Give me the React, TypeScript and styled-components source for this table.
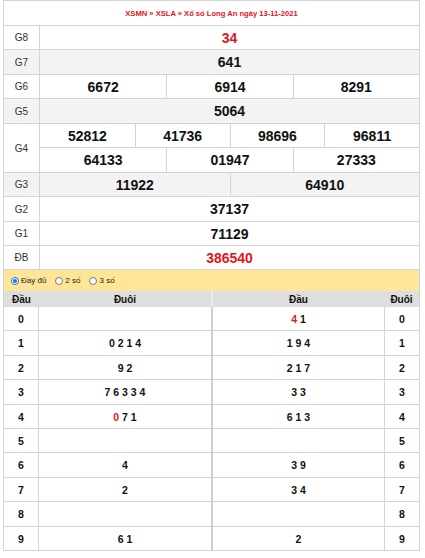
import React from "react";
import styled, { createGlobalStyle } from "styled-components";

const GlobalStyle = createGlobalStyle`
  html, body { margin: 0; padding: 0; background: #fff; }
  body { font-family: "Liberation Sans", Arial, sans-serif; }
`;

const BORDER = "#d4d4d4";
const RED = "#e3151c";

type Side = "left" | "right";

const Page = styled.div`
  padding-left: 3px;
  width: 417px;
`;

const Results = styled.div`
  box-sizing: border-box;
  width: 417px;
  border: 1px solid ${BORDER};
  border-bottom: none;
  display: flex;
  flex-direction: column;
`;

const TitleRow = styled.div`
  box-sizing: border-box;
  height: 25px;
  border-bottom: 1px solid ${BORDER};
  display: flex;
  align-items: center;
  justify-content: center;
  color: ${RED};
  font-weight: bold;
  font-size: 7.6px;
`;

const PrizeRow = styled.div<{ $h: number; $alt?: boolean }>`
  box-sizing: border-box;
  height: ${(p) => p.$h}px;
  border-bottom: 1px solid ${BORDER};
  display: grid;
  grid-template-columns: 36px 1fr;
  background: ${(p) => (p.$alt ? "#f3f3f3" : "#fff")};
`;

const Label = styled.div`
  border-right: 1px solid ${BORDER};
  display: flex;
  align-items: center;
  justify-content: center;
  font-size: 10px;
  color: #333;
`;

const Values = styled.div`
  display: flex;
  flex-direction: column;
`;

const ValueLine = styled.div<{ $n: number; $h?: number; $sep?: boolean }>`
  display: grid;
  grid-template-columns: repeat(${(p) => p.$n}, 1fr);
  flex: ${(p) => (p.$h ? `0 0 ${p.$h}px` : "1 1 auto")};
  box-sizing: border-box;
  border-bottom: ${(p) => (p.$sep ? `1px solid ${BORDER}` : "none")};
`;

const Num = styled.div<{ $red?: boolean }>`
  display: flex;
  align-items: center;
  justify-content: center;
  font-weight: bold;
  font-size: 14px;
  color: ${(p) => (p.$red ? RED : "#111")};
  & + & { border-left: 1px solid ${BORDER}; }
`;

const Options = styled.div`
  box-sizing: border-box;
  height: 21px;
  width: 417px;
  background: #ffe597;
  border-left: 1px solid ${BORDER};
  border-right: 1px solid ${BORDER};
  display: flex;
  align-items: center;
  padding-left: 7px;
  gap: 9px;
`;

const Option = styled.label`
  display: flex;
  align-items: center;
  gap: 2px;
  font-size: 8px;
  color: #222;
`;

const Radio = styled.span<{ $on?: boolean }>`
  box-sizing: border-box;
  width: 8px;
  height: 8px;
  border-radius: 50%;
  background: #fff;
  border: 1px solid ${(p) => (p.$on ? "#1a73e8" : "#767676")};
  display: flex;
  align-items: center;
  justify-content: center;
  &::after {
    content: "";
    width: 4px;
    height: 4px;
    border-radius: 50%;
    background: ${(p) => (p.$on ? "#1a73e8" : "transparent")};
  }
`;

const Loto = styled.div`
  display: grid;
  grid-template-columns: 209px 208px;
`;

const LotoHalf = styled.div`
  display: flex;
  flex-direction: column;
`;

const edges = (side: Side, inner: string) =>
  side === "left"
    ? `border-left: 1px solid ${BORDER}; border-right: 1px solid ${inner};`
    : `border-left: 1px solid ${inner}; border-right: 1px solid ${BORDER};`;

const LotoHead = styled.div<{ $side: Side }>`
  box-sizing: border-box;
  height: 16px;
  background: #dedede;
  ${(p) => edges(p.$side, "#ececec")}
  display: grid;
  grid-template-columns: ${(p) => (p.$side === "left" ? "35px 1fr" : "1fr 35px")};
  font-weight: bold;
  font-size: 10px;
  color: #111;
  & > div {
    display: flex;
    align-items: center;
    justify-content: center;
  }
`;

const LotoRow = styled.div<{ $side: Side; $h: number }>`
  box-sizing: border-box;
  height: ${(p) => p.$h}px;
  border-bottom: 1px solid ${BORDER};
  ${(p) => edges(p.$side, "#cfcfcf")}
  display: grid;
  grid-template-columns: ${(p) => (p.$side === "left" ? "35px 1fr" : "1fr 35px")};
`;

const Digit = styled.div<{ $side: Side }>`
  display: flex;
  align-items: center;
  justify-content: center;
  font-weight: bold;
  font-size: 10.5px;
  color: #111;
  ${(p) =>
    p.$side === "left"
      ? `border-right: 1px solid ${BORDER};`
      : `border-left: 1px solid ${BORDER};`}
`;

const Tails = styled.div`
  display: flex;
  align-items: center;
  justify-content: center;
  font-weight: bold;
  font-size: 10.5px;
  color: #111;
  white-space: pre;
`;

const Red = styled.span`
  color: ${RED};
`;

type Part = { t: string; red?: boolean };

const leftData: Part[][] = [
  [],
  [{ t: "0 2 1 4" }],
  [{ t: "9 2" }],
  [{ t: "7 6 3 3 4" }],
  [{ t: "0", red: true }, { t: " 7 1" }],
  [],
  [{ t: "4" }],
  [{ t: "2" }],
  [],
  [{ t: "6 1" }],
];

const rightData: Part[][] = [
  [{ t: "4", red: true }, { t: " 1" }],
  [{ t: "1 9 4" }],
  [{ t: "2 1 7" }],
  [{ t: "3 3" }],
  [{ t: "6 1 3" }],
  [],
  [{ t: "3 9" }],
  [{ t: "3 4" }],
  [],
  [{ t: "2" }],
];

const lotoHeights = [24, 25, 24, 25, 24, 24, 25, 24, 25, 24];

const renderParts = (parts: Part[]) =>
  parts.map((p, i) => (p.red ? <Red key={i}>{p.t}</Red> : <React.Fragment key={i}>{p.t}</React.Fragment>));

type Prize = { label: string; lines: string[][]; h: number; alt?: boolean; red?: boolean };

const prizes: Prize[] = [
  { label: "G8", lines: [["34"]], h: 24, red: true },
  { label: "G7", lines: [["641"]], h: 25, alt: true },
  { label: "G6", lines: [["6672", "6914", "8291"]], h: 24 },
  { label: "G5", lines: [["5064"]], h: 25, alt: true },
  { label: "G4", lines: [["52812", "41736", "98696", "96811"], ["64133", "01947", "27333"]], h: 49 },
  { label: "G3", lines: [["11922", "64910"]], h: 24, alt: true },
  { label: "G2", lines: [["37137"]], h: 25 },
  { label: "G1", lines: [["71129"]], h: 24 },
  { label: "ĐB", lines: [["386540"]], h: 24, red: true },
];

export default function App() {
  return (
    <>
      <GlobalStyle />
      <Page>
        <Results>
          <TitleRow>XSMN » XSLA » Xổ số Long An ngày 13-11-2021</TitleRow>
          {prizes.map((p) => (
            <PrizeRow key={p.label} $h={p.h} $alt={p.alt}>
              <Label>{p.label}</Label>
              <Values>
                {p.lines.map((line, i) => (
                  <ValueLine
                    key={i}
                    $n={line.length}
                    $h={p.lines.length > 1 && i === 0 ? 24 : undefined}
                    $sep={p.lines.length > 1 && i === 0}
                  >
                    {line.map((n) => (
                      <Num key={n} $red={p.red}>
                        {n}
                      </Num>
                    ))}
                  </ValueLine>
                ))}
              </Values>
            </PrizeRow>
          ))}
        </Results>
        <Options>
          <Option>
            <Radio $on />
            Đầy đủ
          </Option>
          <Option>
            <Radio />2 số
          </Option>
          <Option>
            <Radio />3 số
          </Option>
        </Options>
        <Loto>
          <LotoHalf>
            <LotoHead $side="left">
              <div>Đầu</div>
              <div>Đuôi</div>
            </LotoHead>
            {leftData.map((parts, i) => (
              <LotoRow key={i} $side="left" $h={lotoHeights[i]}>
                <Digit $side="left">{i}</Digit>
                <Tails>{renderParts(parts)}</Tails>
              </LotoRow>
            ))}
          </LotoHalf>
          <LotoHalf>
            <LotoHead $side="right">
              <div>Đầu</div>
              <div>Đuôi</div>
            </LotoHead>
            {rightData.map((parts, i) => (
              <LotoRow key={i} $side="right" $h={lotoHeights[i]}>
                <Tails>{renderParts(parts)}</Tails>
                <Digit $side="right">{i}</Digit>
              </LotoRow>
            ))}
          </LotoHalf>
        </Loto>
      </Page>
    </>
  );
}
